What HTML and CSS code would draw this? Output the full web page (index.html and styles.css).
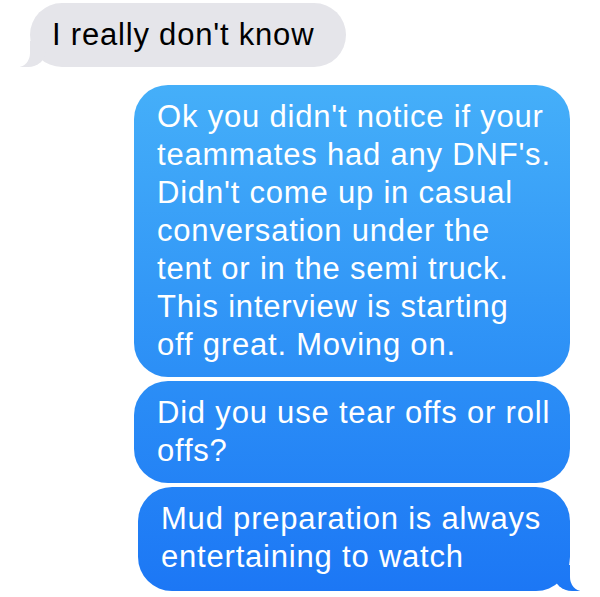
FILE: index.html
```html
<!DOCTYPE html>
<html>
<head>
<meta charset="utf-8">
<link rel="stylesheet" href="styles.css">
</head>
<body>
<div class="thread">
  <div class="bubble received tail-left">I really don't know</div>
  <div class="bubble sent wide first">Ok you didn't notice if your<br>teammates had any DNF's.<br>Didn't come up in casual<br>conversation under the<br>tent or in the semi truck.<br>This interview is starting<br>off great. Moving on.</div>
  <div class="bubble sent wide">Did you use tear offs or roll<br>offs?</div>
  <div class="bubble sent last tail-right">Mud preparation is always<br>entertaining to watch</div>
</div>
</body>
</html>
```

FILE: styles.css
```css
html, body {
  margin: 0;
  padding: 0;
  background: #ffffff;
}

.thread {
  display: flex;
  flex-direction: column;
  padding: 3px 30px 0 30px;
  font-family: "Liberation Sans", Arial, sans-serif;
  font-size: 31px;
  letter-spacing: 0.8px;
  line-height: 38px;
}

.bubble {
  position: relative;
  box-sizing: border-box;
  border-radius: 34px;
  padding: 13px 20px 13px 23px;
  white-space: nowrap;
}

.received {
  align-self: flex-start;
  background: #e5e5ea;
  color: #000000;
  width: 316px;
  padding-left: 22px;
}

.sent {
  align-self: flex-end;
  color: #ffffff;
  background: linear-gradient(to bottom, #45aff9 85px, #2b8ef6 380px, #1c77f5 591px) fixed;
  margin-top: 4px;
}

.wide {
  width: 436px;
}

.first {
  margin-top: 18px;
}

.last {
  width: 432px;
  padding-bottom: 15px;
}

.tail-left::before {
  content: "";
  position: absolute;
  left: -10px;
  bottom: 0;
  width: 26px;
  height: 26px;
  background: #e5e5ea;
  border-bottom-right-radius: 18px 16px;
  z-index: 0;
}

.tail-left::after {
  content: "";
  position: absolute;
  left: -16px;
  bottom: 0;
  width: 16px;
  height: 28px;
  background: #ffffff;
  border-bottom-right-radius: 12px 14px;
  z-index: 1;
}

.tail-right::before {
  content: "";
  position: absolute;
  right: -10px;
  bottom: 0;
  width: 26px;
  height: 26px;
  background: linear-gradient(to bottom, #45aff9 85px, #2b8ef6 380px, #1c77f5 591px) fixed;
  border-bottom-left-radius: 18px 16px;
  z-index: 0;
}

.tail-right::after {
  content: "";
  position: absolute;
  right: -16px;
  bottom: 0;
  width: 16px;
  height: 28px;
  background: #ffffff;
  border-bottom-left-radius: 12px 14px;
  z-index: 1;
}
```
